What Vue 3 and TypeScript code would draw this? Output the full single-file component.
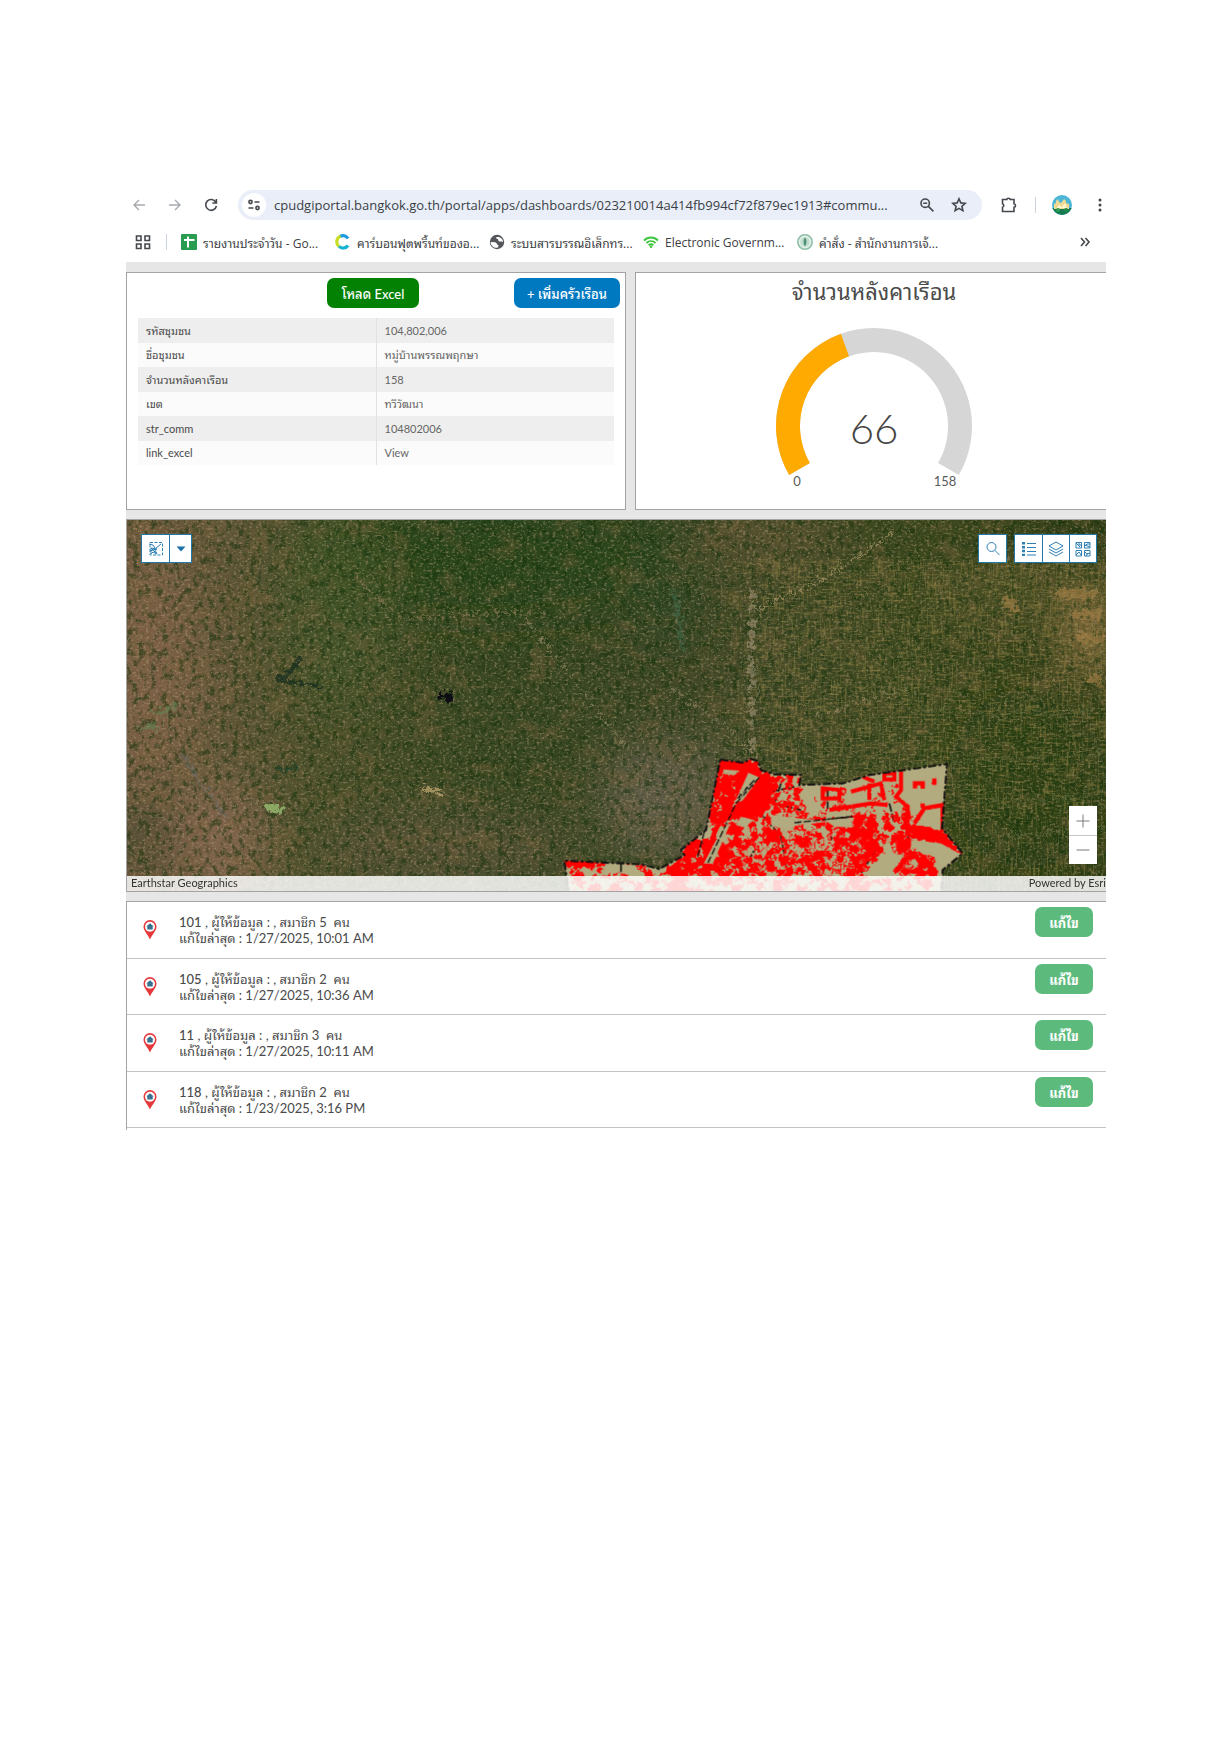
<script setup lang="ts">
interface Bookmark { icon: string; label: string }
interface Field { name: string; value: string; link?: boolean }
interface Household { no: string; members: number; edited: string }

const address = 'cpudgiportal.bangkok.go.th/portal/apps/dashboards/023210014a414fb994cf72f879ec1913#commu...'

const bookmarks: Bookmark[] = [
  { icon: 'sheet', label: 'รายงานประจำวัน - Go...' },
  { icon: 'carbon', label: 'คาร์บอนฟุตพริ้นท์ของอ...' },
  { icon: 'globe', label: 'ระบบสารบรรณอิเล็กทร...' },
  { icon: 'wifi', label: 'Electronic Governm...' },
  { icon: 'seal', label: 'คำสั่ง - สำนักงานการเจ้...' },
]

const fields: Field[] = [
  { name: 'รหัสชุมชน', value: '104,802,006' },
  { name: 'ชื่อชุมชน', value: 'หมู่บ้านพรรณพฤกษา' },
  { name: 'จำนวนหลังคาเรือน', value: '158' },
  { name: 'เขต', value: 'ทวีวัฒนา' },
  { name: 'str_comm', value: '104802006' },
  { name: 'link_excel', value: 'View', link: true },
]

const households: Household[] = [
  { no: '101', members: 5, edited: '1/27/2025, 10:01 AM' },
  { no: '105', members: 2, edited: '1/27/2025, 10:36 AM' },
  { no: '11', members: 3, edited: '1/27/2025, 10:11 AM' },
  { no: '118', members: 2, edited: '1/23/2025, 3:16 PM' },
]

// Gauge: a 240 degree dial, starting 120 degrees left of the top
const total = 158
const current = 66
function arc(from: number, to: number): string {
  const point = (deg: number, r: number): string => {
    const a = (deg * Math.PI) / 180
    return `${(100 + r * Math.sin(a)).toFixed(2)} ${(98 - r * Math.cos(a)).toFixed(2)}`
  }
  const large = to - from > 180 ? 1 : 0
  return `M${point(from, 98)}A98 98 0 ${large} 1 ${point(to, 98)}L${point(to, 74)}A74 74 0 ${large} 0 ${point(from, 74)}Z`
}
const split = -120 + (current / total) * 240

// Seeded generator so the map draws the same on each load
let seed = 20250127
function rand(): number {
  seed = (seed * 1664525 + 1013904223) % 4294967296
  return seed / 4294967296
}

interface Blob { x: number; y: number; r: number }
function scatter(n: number, x0: number, y0: number, x1: number, y1: number, r0: number, r1: number): Blob[] {
  return Array.from({ length: n }, () => ({
    x: Math.round(x0 + rand() * (x1 - x0)),
    y: Math.round(y0 + rand() * (y1 - y0)),
    r: Math.round(r0 + rand() * (r1 - r0)),
  }))
}
const houses: Blob[] = [
  ...scatter(70, 520, 60, 660, 280, 6, 15),
  ...scatter(34, 660, 100, 780, 220, 5, 11),
  ...scatter(24, 700, 170, 860, 240, 4, 8),
  ...scatter(270, 570, 240, 1000, 400, 6, 15),
  ...scatter(60, 430, 300, 620, 410, 8, 16),
  ...scatter(26, 850, 130, 1090, 220, 4, 8),
  ...scatter(90, 900, 225, 1110, 335, 6, 14),
  ...scatter(34, 1060, 340, 1180, 400, 6, 12),
  ...scatter(100, 90, 405, 1200, 465, 6, 18),
  ...scatter(12, 80, 365, 340, 400, 5, 9),
]
const fieldsOpen: Blob[] = [
  ...scatter(110, 580, 250, 1000, 400, 3, 9),
  ...scatter(34, 420, 320, 620, 440, 3, 8),
  ...scatter(40, 100, 405, 1200, 465, 5, 12),
  ...scatter(16, 520, 80, 600, 260, 3, 6),
]

const areaPath =
  'M538 58L560 62L606 68L630 56L650 64L660 90L700 103L780 105L775 135L905 130L985 105L1218 72L1203 265L1265 340L1205 390L1200 470H85L70 362L300 373L355 387L430 345L420 330L495 270Z'
</script>

<template>
  <main class="page">
    <header class="browser">
      <div class="toolbar">
        <button class="icon-btn muted" type="button" aria-label="Back">
          <svg width="16" height="16" viewBox="0 0 16 16"><path d="M14 8H3M8 3L3 8l5 5" /></svg>
        </button>
        <button class="icon-btn muted" type="button" aria-label="Forward">
          <svg width="16" height="16" viewBox="0 0 16 16"><path d="M2 8h11M8 3l5 5-5 5" /></svg>
        </button>
        <button class="icon-btn" type="button" aria-label="Reload">
          <svg width="16" height="16" viewBox="0 0 16 16"><path d="M12.8 5.2A5.4 5.4 0 1 0 13.4 9M13.4 2v4h-4" /></svg>
        </button>
        <div class="address">
          <button class="site-info" type="button" aria-label="Site information">
            <svg width="14" height="14" viewBox="0 0 14 14"><circle cx="3.5" cy="4" r="1.6" /><path d="M7.5 4h5M1.5 10h5" /><circle cx="10.5" cy="10" r="1.6" /></svg>
          </button>
          <input type="text" aria-label="Address" :value="address" />
          <button class="icon-btn" type="button" aria-label="Zoom">
            <svg width="16" height="16" viewBox="0 0 16 16"><circle cx="6.2" cy="6.2" r="4.2" /><path d="M9.4 9.4l5 5M4.2 6.2h4" /></svg>
          </button>
          <button class="icon-btn" type="button" aria-label="Bookmark">
            <svg width="16" height="16" viewBox="0 0 16 16"><path d="M8 1.8l1.8 4.1 4.5.4-3.4 3 1 4.4L8 11.4l-3.9 2.3 1-4.4-3.4-3 4.5-.4z" /></svg>
          </button>
        </div>
        <div class="toolbar-end">
          <button class="icon-btn" type="button" aria-label="Extensions">
            <svg width="18" height="18" viewBox="0 0 18 18"><path d="M2.500 3.500h4.300a1.700 1.300 0 0 1 3.400 0H14v4.300a1.500 1.700 0 0 1 0 3.400v4.300H2.500v-4.200a1.900 1.900 0 0 0 0-3.600z" /></svg>
          </button>
          <span class="rule"></span>
          <button class="icon-btn" type="button" aria-label="Profile">
            <svg class="plain" width="20" height="20" viewBox="0 0 20 20">
              <defs><clipPath id="face"><circle cx="10" cy="10" r="10" /></clipPath></defs>
              <g clip-path="url(#face)">
                <rect width="20" height="20" fill="#4db6d6" />
                <path d="M0 13h20v7H0z" fill="#157a52" />
                <path d="M2 14V9l2-1V6l2-2 1 3 2 1 3-4 2 2v2l3 1v5z" fill="#efd993" />
                <path d="M5 13l2-3 3 2 3-4 2 5z" fill="#fff6cf" />
                <circle cx="6" cy="15" r="2" fill="#2e9b4f" /><circle cx="14" cy="15" r="2" fill="#1f8a4c" />
              </g>
            </svg>
          </button>
          <button class="icon-btn" type="button" aria-label="Menu">
            <svg class="plain" width="16" height="16" viewBox="0 0 16 16"><g fill="#41454a"><circle cx="8" cy="3" r="1.500" /><circle cx="8" cy="8" r="1.500" /><circle cx="8" cy="13" r="1.500" /></g></svg>
          </button>
        </div>
      </div>

      <nav class="bookmarks" aria-label="Bookmarks">
        <button class="icon-btn" type="button" aria-label="Apps">
          <svg width="16" height="16" viewBox="0 0 16 16"><path d="M1.500 2h4.500v4.500H1.500zM10 2h4.500v4.500H10zM1.500 10h4.500v4.500H1.500zM10 10h4.500v4.500H10z" /></svg>
        </button>
        <span class="rule"></span>
        <a v-for="b in bookmarks" :key="b.label" class="bookmark" href="#">
          <svg width="16" height="16" viewBox="0 0 16 16">
            <template v-if="b.icon === 'sheet'">
              <rect width="16" height="16" rx="1" fill="#2a9c50" />
              <path d="M7 2.500v11M3 6h10.500" stroke="#fff" stroke-width="2" />
            </template>
            <template v-else-if="b.icon === 'carbon'">
              <path d="M13 4.500A6 6 0 0 0 5 2.500" fill="none" stroke="#1d9be0" stroke-width="3.200" />
              <path d="M5.500 2.300A6 6 0 0 0 4 12.500" fill="none" stroke="#c8dc28" stroke-width="3.200" />
              <path d="M4 12.400A6 6 0 0 0 13 11.500" fill="none" stroke="#16b4d0" stroke-width="3.200" />
            </template>
            <template v-else-if="b.icon === 'globe'">
              <circle cx="8" cy="8" r="7.200" fill="#54585d" />
              <path d="M1.500 8.500C4 7.500 8 8 8 10.500c2 0 2 2 .5 3.200-3 .8-6.500-1.700-7-5.200zM7.500 3c-1 1.500.5 2 1.500 2 0 2 1 2.500 2.500 2.500 1 0 1.500 0 2.500.5C14 5 11.500 2.500 7.500 3z" fill="#fff" />
            </template>
            <template v-else-if="b.icon === 'wifi'">
              <g fill="none" stroke="#3ec63e" stroke-width="1.800"><path d="M1 6.500c4-4 10-4 14 0M3.400 9c2.700-2.600 6.500-2.600 9.200 0M5.600 11.300c1.500-1.300 3.300-1.300 4.800 0" /></g>
              <circle cx="8" cy="12.700" r="1.300" fill="#3ec63e" />
            </template>
            <template v-else>
              <circle cx="8" cy="8" r="7.200" fill="#e4f0ea" stroke="#8fbfa8" />
              <circle cx="8" cy="8" r="4.800" fill="#c3ded0" />
              <path d="M8 3.500c2 2 2 6 0 9-2-3-2-7 0-9z" fill="#4c9474" />
            </template>
          </svg>
          <span>{{ b.label }}</span>
        </a>
        <button class="more" type="button" aria-label="More bookmarks">
          <svg width="12" height="12" viewBox="0 0 12 12"><path d="M2 2l3.500 4L2 10M6.500 2L10 6l-3.500 4" /></svg>
        </button>
      </nav>
    </header>

    <div class="dashboard">
      <div class="top">
        <section class="panel details">
          <div class="actions">
            <button class="btn load" type="button">โหลด Excel</button>
            <button class="btn add" type="button">+ เพิ่มครัวเรือน</button>
          </div>
          <table>
            <tbody>
              <tr v-for="f in fields" :key="f.name">
                <th scope="row">{{ f.name }}</th>
                <td><a v-if="f.link" href="#">{{ f.value }}</a><template v-else>{{ f.value }}</template></td>
              </tr>
            </tbody>
          </table>
        </section>

        <section class="panel gauge">
          <h2>จำนวนหลังคาเรือน</h2>
          <svg width="200" height="164" viewBox="0 0 200 164" role="img" aria-label="66 / 158">
            <path :d="arc(-120, 120)" fill="#d6d6d6" />
            <path :d="arc(-120, split)" fill="#ffaa00" />
            <text class="value" x="100" y="116">{{ current }}</text>
            <text x="23" y="158">0</text>
            <text x="171" y="158">{{ total }}</text>
          </svg>
        </section>
      </div>

      <section class="map">
        <svg class="imagery" viewBox="0 0 979 373" preserveAspectRatio="xMidYMid slice" aria-hidden="true">
          <defs>
            <linearGradient id="land" x1="0" x2="1" y1="0" y2="0">
              <stop offset="0" stop-color="#705b40" />
              <stop offset=".1" stop-color="#605638" />
              <stop offset=".2" stop-color="#4b502b" />
              <stop offset=".38" stop-color="#384722" />
              <stop offset=".6" stop-color="#404828" />
              <stop offset=".8" stop-color="#3c481f" />
              <stop offset="1" stop-color="#344019" />
            </linearGradient>
            <filter id="soft" x="-50%" y="-50%" width="200%" height="200%"><feGaussianBlur stdDeviation="22" /></filter>
            <filter id="grain" x="0" y="0" width="100%" height="100%" color-interpolation-filters="sRGB">
              <feTurbulence type="fractalNoise" baseFrequency=".31 .43" numOctaves="4" seed="4" />
              <feColorMatrix values="0 0 0 0 .72  0 0 0 0 .63  0 0 0 0 .48  4.500 0 0 0 -2.350" />
            </filter>
            <filter id="shade" x="0" y="0" width="100%" height="100%" color-interpolation-filters="sRGB">
              <feTurbulence type="fractalNoise" baseFrequency=".17 .13" numOctaves="5" seed="11" />
              <feColorMatrix values="0 0 0 0 .07  0 0 0 0 .19  0 0 0 0 .04  0 4.500 0 0 -2.200" />
            </filter>
            <filter id="patch" x="0" y="0" width="100%" height="100%" color-interpolation-filters="sRGB">
              <feTurbulence type="fractalNoise" baseFrequency=".035 .045" numOctaves="5" seed="7" />
              <feColorMatrix values="0 0 0 0 .48  0 0 0 0 .39  0 0 0 0 .24  0 0 4 0 -2" />
            </filter>
            <filter id="canals" x="0" y="0" width="100%" height="100%" color-interpolation-filters="sRGB">
              <feTurbulence type="fractalNoise" baseFrequency=".45 .05" numOctaves="3" seed="21" />
              <feColorMatrix values="0 0 0 0 .58  0 0 0 0 .52  0 0 0 0 .28  4 0 0 0 -2.100" />
            </filter>
            <filter id="paddies" x="0" y="0" width="100%" height="100%" color-interpolation-filters="sRGB">
              <feTurbulence type="fractalNoise" baseFrequency=".07 .47" numOctaves="3" seed="31" />
              <feColorMatrix values="0 0 0 0 .58  0 0 0 0 .51  0 0 0 0 .28  4 0 0 0 -2.100" />
            </filter>
            <linearGradient id="fade" x1="0" x2="1" y1="0" y2="0">
              <stop offset="0" stop-color="#fff" stop-opacity="0" />
              <stop offset=".2" stop-color="#fff" />
            </linearGradient>
            <mask id="east"><rect x="560" y="0" width="419" height="373" fill="url(#fade)" /></mask>
            <filter id="ragged" x="-5%" y="-5%" width="110%" height="110%">
              <feTurbulence type="fractalNoise" baseFrequency=".14" numOctaves="2" seed="3" />
              <feDisplacementMap in="SourceGraphic" scale="6" xChannelSelector="R" yChannelSelector="G" />
            </filter>
            <filter id="jagged" x="-5%" y="-5%" width="110%" height="110%">
              <feTurbulence type="fractalNoise" baseFrequency=".07" numOctaves="2" seed="5" />
              <feDisplacementMap in="SourceGraphic" scale="34" xChannelSelector="R" yChannelSelector="G" />
            </filter>
            <filter id="rough" x="-20%" y="-20%" width="140%" height="140%">
              <feTurbulence type="fractalNoise" baseFrequency=".2" numOctaves="4" seed="9" />
              <feDisplacementMap in="SourceGraphic" scale="16" xChannelSelector="R" yChannelSelector="G" />
            </filter>
            <clipPath id="area"><path :d="areaPath" /></clipPath>
          </defs>
          <rect width="979" height="373" fill="url(#land)" />
          <g filter="url(#soft)">
            <ellipse cx="360" cy="40" rx="190" ry="60" fill="#24451a" opacity=".8" />
            <ellipse cx="210" cy="90" rx="60" ry="100" fill="#445526" opacity=".7" />
            <ellipse cx="30" cy="150" rx="45" ry="110" fill="#826249" opacity=".7" />
            <ellipse cx="90" cy="320" rx="50" ry="60" fill="#876650" opacity=".8" />
            <ellipse cx="20" cy="320" rx="25" ry="26" fill="#33402a" opacity=".9" />
            <ellipse cx="320" cy="330" rx="130" ry="40" fill="#57523a" opacity=".8" />
            <ellipse cx="540" cy="280" rx="70" ry="60" fill="#625c48" opacity=".9" />
            <ellipse cx="540" cy="60" rx="40" ry="70" fill="#2e4721" opacity=".7" />
            <ellipse cx="900" cy="260" rx="80" ry="90" fill="#283e12" opacity=".7" />
            <ellipse cx="640" cy="20" rx="80" ry="24" fill="#635534" opacity=".8" />
            <ellipse cx="960" cy="110" rx="26" ry="50" fill="#947342" opacity=".9" />
            <ellipse cx="870" cy="70" rx="70" ry="30" fill="#565429" opacity=".7" />
          </g>
          <rect width="979" height="373" filter="url(#patch)" opacity=".35" />
          <rect width="979" height="373" filter="url(#shade)" opacity=".5" />
          <rect width="979" height="373" filter="url(#grain)" opacity=".4" />
          <g mask="url(#east)">
            <rect x="560" y="40" width="419" height="333" filter="url(#canals)" opacity=".4" />
            <rect x="560" y="40" width="419" height="260" filter="url(#paddies)" opacity=".45" />
          </g>
          <g filter="url(#rough)" fill="none" stroke-linecap="round">
            <path d="M625 75V260" stroke="#a99a80" stroke-width="7" stroke-dasharray="1 11 2 15 1 9" opacity=".5" />
            <path d="M630 90L700 58L770 12" stroke="#b5a070" stroke-width="3" stroke-dasharray="5 9 2 7" opacity=".6" />
            <path d="M545 170L590 200L620 230M690 195L780 170" stroke="#a4936f" stroke-width="3" stroke-dasharray="3 7" opacity=".5" />
            <path d="M230 60L275 100L320 97L420 92" stroke="#8e7c58" stroke-width="3" stroke-dasharray="3 8" opacity=".6" />
            <path d="M400 100L430 140L500 230" stroke="#9a8c68" stroke-width="3" stroke-dasharray="2 10" opacity=".6" />
            <path d="M547 75L557 130" stroke="#41694b" stroke-width="4" opacity=".6" />
            <path d="M155 162L175 138M150 160L195 168" stroke="#18301f" stroke-width="4" opacity=".8" />
            <path d="M30 195l20-8M15 210l12-3" stroke="#5f8452" stroke-width="6" opacity=".6" />
            <path d="M55 235L75 265L100 300" stroke="#68685f" stroke-width="3" opacity=".6" />
            <path d="M140 288l14 3" stroke="#8fb06a" stroke-width="7" opacity=".9" />
            <path d="M300 270l12 2" stroke="#b9a06c" stroke-width="6" opacity=".8" />
            <path d="M318 178l5 1" stroke="#0b0e12" stroke-width="9" />
            <path d="M150 250h20" stroke="#24452c" stroke-width="3" />
            <path d="M930 75h36M950 95h20M955 120h18M965 160h8M880 80l6 10" stroke="#a5804a" stroke-width="9" opacity=".6" />
            <path d="M790 190Q880 200 979 190M790 245Q880 240 979 235M850 280Q910 285 979 275M850 315Q910 318 979 308" stroke="#5d6a3e" stroke-width="1" opacity=".8" />
          </g>

          <g transform="translate(414 221) scale(.33333)">
            <g clip-path="url(#area)">
              <path :d="areaPath" fill="#b3ab80" />
              <g fill="none" stroke="#111" stroke-width="5" filter="url(#ragged)">
                <path d="M655 215L720 290L740 400M760 250L930 230M860 150V210M985 235L1010 320L960 400M1045 190L1060 250M1105 190L1200 175M690 155L760 140M240 370V410M430 345L500 300M720 130L700 190L780 210M640 330L600 400M870 290L890 330M1100 290L1120 320" stroke-dasharray="26 5" />
              </g>
              <g filter="url(#jagged)">
                <g fill="#f00"><circle v-for="(b, i) in houses" :key="i" :cx="b.x" :cy="b.y" :r="b.r" /></g>
                <g fill="#f00">
                  <path d="M530 60H650L665 95L700 110L690 200L640 230L560 240L505 250L520 110Z" />
                  <path d="M430 340L500 300L540 390V410H350Z" />
                  <path d="M1080 250L1205 270L1270 345L1225 330L1110 290Z" />
                  <path d="M1130 335L1190 380L1180 395L1120 350Z" />
                  <path d="M72 364H190V376L120 384H80Z" />
                </g>
                <g fill="#b3ab80"><circle v-for="(b, i) in fieldsOpen" :key="i" :cx="b.x" :cy="b.y" :r="b.r" /></g>
              </g>
              <g filter="url(#ragged)">
                <g fill="#b3ab80">
                  <path d="M622 98L655 112L602 185L584 182ZM545 265L568 250L515 372L488 370L520 310ZM600 230L640 240L610 262L585 255ZM548 88L596 92L580 106L545 100ZM1110 300L1200 310L1262 345L1205 390L1180 352L1110 320ZM1020 340L1090 345L1050 400H990ZM690 225L860 245L760 258L740 272L690 255ZM850 240L940 232L930 262L880 260ZM1110 85H1215L1205 190L1110 230L1095 150Z" />
                </g>
                <path d="M1120 250L1150 205L1205 195V275M1122 145V130H1145V146M1180 115V135M1145 190v14" fill="none" stroke="#f00" stroke-width="13" />
                <path d="M865 210L990 190L1040 195M930 155L1020 130L1030 180M1030 100H1060V118H1030ZM1080 95V150L1065 170L1100 200V250M965 110L1000 125M845 145V175H895V150ZM985 130V180" fill="none" stroke="#f00" stroke-width="12" />
                <path d="M655 112L585 190L500 370M490 275L470 350M640 120L590 175M760 248L935 230" fill="none" stroke="#111" stroke-width="4" stroke-dasharray="22 6" />
                <path d="M1070 385l25-30 30-5 20 30-30 15 55 5M560 200L510 300" fill="none" stroke="#f00" stroke-width="12" />
              </g>
            </g>
            <path :d="areaPath" fill="none" stroke="#111" stroke-width="6" stroke-dasharray="24 7 8 7" />
          </g>
        </svg>

        <div class="tools left">
          <button type="button" class="tool" aria-label="Select features">
            <svg width="16" height="16" viewBox="0 0 16 16"><path d="M2 1.500h12.500v12.500H2z" stroke-dasharray="3 1.500" /><path d="M1 3l4 1 2 3M3 7l6 6M3 7v6l2-2 4 2-2-4 2-1zM8 7l5-4M2 10l6-2" /></svg>
          </button>
          <button type="button" class="tool narrow" aria-label="Selection options">
            <svg width="12" height="8" viewBox="0 0 12 8"><path d="M1.500 1.500h9L6 6.500z" fill="#196fa6" stroke="none" /></svg>
          </button>
        </div>
        <div class="tools right">
          <div class="group">
            <button type="button" class="tool" aria-label="Search">
              <svg width="16" height="16" viewBox="0 0 16 16"><circle cx="6.500" cy="6" r="4.500" /><path d="M9.800 9.300l4.700 4.700" /></svg>
            </button>
          </div>
          <div class="group">
            <button type="button" class="tool" aria-label="Legend">
              <svg width="16" height="16" viewBox="0 0 16 16"><path d="M6 2.500h9M6 6.500h9M6 10.500h9M6 14h9" /><path d="M2.500 1v14" stroke-width="3" stroke-dasharray="2.500 1.400" /></svg>
            </button>
            <button type="button" class="tool" aria-label="Layers">
              <svg width="16" height="16" viewBox="0 0 16 16"><path d="M8 1l7 4-7 4-7-4zM1 8l7 4 7-4M1 11l7 4 7-4" /></svg>
            </button>
            <button type="button" class="tool" aria-label="Basemap gallery">
              <svg width="16" height="16" viewBox="0 0 16 16"><path d="M1 1.500h5.500V7H1zM9.500 1.500H15V7H9.500zM1 9.500h5.500V15H1zM9.500 9.500H15V15H9.500zM1 2l4 4M4 2v2h2M10 5l2-2h3M10 4l5 2M1 14l3-3 2 3M10 11l2 2 3-1M11 15l2-3" /></svg>
            </button>
          </div>
        </div>
        <div class="zoom">
          <button type="button" aria-label="Zoom in"><svg width="16" height="16" viewBox="0 0 16 16"><path d="M8 1.500v13M1.500 8h13" /></svg></button>
          <button type="button" aria-label="Zoom out"><svg width="16" height="16" viewBox="0 0 16 16"><path d="M1.500 8h13" /></svg></button>
        </div>
        <div class="credits"><span>Earthstar Geographics</span><span>Powered by Esri</span></div>
      </section>

      <ul class="list">
        <li v-for="h in households" :key="h.no">
          <svg class="pin" width="14" height="20" viewBox="0 0 14 20">
            <path d="M7 0a6.500 6.500 0 0 1 6.500 6.500C13.500 11 9 14.500 7 19.500 5 14.500.5 11 .5 6.500A6.500 6.500 0 0 1 7 0z" fill="#e5383b" />
            <circle cx="7" cy="6.700" r="5" fill="#fff" />
            <path d="M7 3.200L3.300 6.500h1v3h5.400v-3h1z" fill="#37708c" />
          </svg>
          <p><b>{{ h.no }}</b> , ผู้ให้ข้อมูล : , สมาชิก {{ h.members }}&nbsp; คน<br />แก้ไขล่าสุด : {{ h.edited }}</p>
          <button class="btn edit" type="button">แก้ไข</button>
        </li>
      </ul>
    </div>
  </main>
</template>

<style>
body { background: #fff; }
</style>

<style scoped>
* { box-sizing: border-box; }
.page {
  padding: 187px 126px 0 126px;
  font-family: Lato, "Noto Sans Thai Looped", "Noto Looped Thai", Loma, Waree, "Noto Sans Thai", sans-serif;
  color: #4a4a4a;
}
button { font: inherit; border: 0; margin: 0; padding: 0; background: none; cursor: pointer; }
a { color: inherit; text-decoration: none; }
svg { display: block; flex: none; }

.browser { font-family: "Open Sans", "Noto Sans Thai Looped", "Noto Looped Thai", Loma, Waree, "Noto Sans Thai", sans-serif; color: #3c4043; }
.browser svg { fill: none; stroke: #45494e; stroke-width: 1.6; }
.browser svg.plain, .browser .bookmark svg { stroke: none; fill: none; }
.toolbar { display: flex; align-items: center; height: 35px; gap: 12px; padding-left: 1px; }
.icon-btn { width: 24px; height: 24px; display: flex; align-items: center; justify-content: center; flex: none; }
.browser .muted svg { stroke: #a6a9ad; stroke-width: 1.4; }
.address {
  flex: 1; min-width: 0; height: 30px; margin-left: 3px; padding: 0 11px 0 4px;
  display: flex; align-items: center; gap: 8px;
  background: #e9eef8; border-radius: 15px;
}
.site-info { width: 24px; height: 24px; border-radius: 50%; background: #fff; display: flex; align-items: center; justify-content: center; flex: none; }
.address input {
  flex: 1; min-width: 0; border: 0; padding: 0; background: none; outline: 0;
  font: 13px "Open Sans", sans-serif; color: #3a3f46;
}
.toolbar-end { display: flex; align-items: center; gap: 14px; margin: 0 -6px 0 3px; }
.rule { width: 1px; height: 16px; background: #cdd3dc; }
.bookmarks { display: flex; align-items: center; height: 40px; gap: 20px; padding: 0 15px 0 5px; font-size: 12px; }
.bookmarks > .rule { margin: 0 -6px 0 -9px; }
.bookmark { display: flex; align-items: center; gap: 6px; width: 134px; white-space: nowrap; }
.more { margin-left: auto; }

.dashboard { background: #e6e6e6; padding-top: 10px; display: flex; flex-direction: column; gap: 9px; }
.top { display: grid; grid-template-columns: 500fr 471fr; gap: 9px; }
.panel { background: #fff; border: 1px solid #a3a3a3; height: 238px; }
.gauge { border-right: 0; display: flex; flex-direction: column; align-items: center; padding: 5px 0 0 6px; }
.details { padding: 5px 5px 0; }
.actions { display: grid; grid-template-columns: 1fr auto 1fr; align-items: center; margin-bottom: 10px; }
.btn { height: 30px; border-radius: 7px; color: #fff; font-size: 13px; font-weight: 500; white-space: nowrap; }
.load { grid-column: 2; width: 92px; background: #028102; margin-right: 6px; }
.add { justify-self: end; width: 106px; background: #0079c1; }
table { width: calc(100% - 12px); margin-left: 6px; border-collapse: collapse; table-layout: fixed; font-size: 11px; }
tr { height: 24px; background: #fbfbfb; }
tr:nth-child(odd) { background: #eee; height: 25px; }
th, td { text-align: left; font-weight: 400; padding: 0 8px; line-height: 16px; }
td { border-left: 1px solid #e2e2e2; color: #666; }
.gauge h2 { margin: 0 0 22px; font-size: 22px; line-height: 28px; font-weight: 400; white-space: nowrap; }
.gauge text { text-anchor: middle; font-size: 13px; fill: #5a5a5a; }
.gauge .value { font-size: 42px; font-weight: 300; fill: #444; }

.map { position: relative; height: 373px; overflow: hidden; border: 1px solid #a3a3a3; border-right: 0; }
.imagery { width: 100%; height: 100%; }
.tools { position: absolute; top: 14px; display: flex; }
.tools.left { left: 14px; border: 1px solid #1f78ab; }
.tools.right { right: 9px; gap: 7px; }
.group { display: flex; border: 1px solid #1f78ab; }
.tool { width: 27px; height: 27px; background: #fff; display: flex; align-items: center; justify-content: center; }
.tool + .tool { border-left: 1px solid #1f78ab; }
.tool.narrow { width: 22px; }
.tool svg { fill: none; stroke: #2f80b4; stroke-width: 1; }
.zoom { position: absolute; right: 9px; bottom: 27px; width: 28px; background: #fff; }
.zoom button { width: 28px; height: 29px; display: flex; align-items: center; justify-content: center; }
.zoom button + button { border-top: 1px solid #c6c6c6; }
.zoom svg { stroke: #7b7b7b; stroke-width: 1; }
.credits {
  position: absolute; left: 0; right: 0; bottom: 0; height: 15px; padding: 0 0 0 4px;
  display: flex; justify-content: space-between;
  background: rgba(255, 255, 255, .84); font-size: 11px; line-height: 13px; color: #333;
}

.list { list-style: none; margin: 0; padding: 0 0 2px; background: #fff; border: 1px solid #a3a3a3; border-width: 1px 0 0 1px; }
.list li { display: flex; align-items: center; height: 57px; padding: 0 13px 0 16px; border-bottom: 1px solid #c4c4c4; }
.list li:nth-child(even) { height: 56px; }
.list p { flex: 1; margin: 0 0 0 22px; font-size: 13px; line-height: 16px; }
.list b { font-weight: 500; }
.edit { width: 58px; background: #5dba7d; align-self: flex-start; margin-top: 5px; font-weight: 700; }
</style>
